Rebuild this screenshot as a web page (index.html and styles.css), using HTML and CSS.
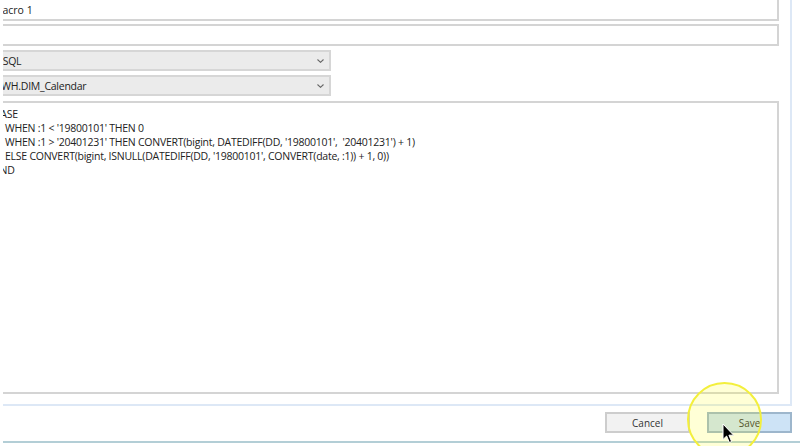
FILE: index.html
```html
<!DOCTYPE html>
<html>
<head>
<meta charset="utf-8">
<link rel="stylesheet" href="styles.css">
</head>
<body>
<div class="window">
  <div class="clip">
    <div class="panel">
      <div class="fields">
        <div class="textbox first">Macro 1</div>
        <div class="textbox second"></div>
        <div class="combo"><span class="combo-text">T-SQL</span><svg class="chevron" width="7" height="4" viewBox="0 0 7 4"><polyline points="0.5,0.5 3.5,3.3 6.5,0.5" fill="none" stroke="#666" stroke-width="1.1"/></svg></div>
        <div class="combo last"><span class="combo-text">DWH.DIM_Calendar</span><svg class="chevron" width="7" height="4" viewBox="0 0 7 4"><polyline points="0.5,0.5 3.5,3.3 6.5,0.5" fill="none" stroke="#666" stroke-width="1.1"/></svg></div>
        <div class="editor">
          <div class="line">CASE</div>
          <div class="line indent">WHEN :1 &lt; '19800101' THEN 0</div>
          <div class="line indent">WHEN :1 &gt; '20401231' THEN CONVERT(bigint, DATEDIFF(DD, '19800101',&nbsp; '20401231') + 1)</div>
          <div class="line indent">ELSE CONVERT(bigint, ISNULL(DATEDIFF(DD, '19800101', CONVERT(date, :1)) + 1, 0))</div>
          <div class="line">END</div>
        </div>
      </div>
    </div>
    <div class="buttons">
      <div class="btn cancel">Cancel</div>
      <div class="btn save">Save</div>
    </div>
    <div class="bottom-line"></div>
  </div>
  <div class="highlight"></div>
  <svg class="cursor" width="14" height="21" viewBox="0 0 14 21"><path d="M1,1 L1,16.5 L4.6,13 L7.4,19.5 L9.6,18.5 L6.9,12.2 L11.6,12.2 Z" fill="#000" stroke="#fff" stroke-width="1" stroke-linejoin="round"/></svg>
</div>
</body>
</html>
```
FILE: styles.css
```css
html, body {
  margin: 0;
  padding: 0;
  background: #ffffff;
}
body {
  font-family: "Open Sans", "Noto Sans", sans-serif;
  font-size: 10px;
  color: #222222;
}
.window {
  position: relative;
  width: 800px;
  height: 446px;
  overflow: hidden;
  background: #ffffff;
}
.clip {
  margin-left: 3px;
  height: 446px;
  overflow: hidden;
}
.panel {
  box-sizing: border-box;
  width: 804px;
  margin-left: -15px;
  margin-top: -2px;
  padding: 0 11px 10px 0;
  border-right: 2px solid #dde8f6;
  border-bottom: 2px solid #dde8f6;
}
.fields {
  display: flex;
  flex-direction: column;
}
.textbox {
  box-sizing: border-box;
  border: 2px solid #d4d4d4;
  background: #ffffff;
  padding: 0 3px;
  display: flex;
  align-items: center;
  line-height: 14px;
  font-size: 10.5px;
}
.textbox.first {
  height: 23px;
  margin-bottom: 3px;
  padding-top: 1px;
}
.textbox.second {
  height: 22px;
  margin-bottom: 4px;
}
.combo {
  box-sizing: border-box;
  width: 343px;
  height: 21px;
  margin-bottom: 4px;
  border: 2px solid #d6d6d6;
  background: #ebebeb;
  display: flex;
  align-items: center;
  justify-content: space-between;
  padding: 0 5px 0 4px;
  font-size: 10.5px;
  letter-spacing: -0.25px;
}
.combo.last {
  margin-bottom: 5px;
}
.chevron {
  display: block;
}
.editor {
  box-sizing: border-box;
  height: 293px;
  border: 2px solid #d4d4d4;
  background: #ffffff;
  padding: 4px 4px 0 4px;
  font-size: 10.5px;
  letter-spacing: -0.25px;
}
.line {
  line-height: 14px;
  white-space: nowrap;
}
.line.indent {
  padding-left: 11px;
}
.buttons {
  display: flex;
  justify-content: flex-end;
  gap: 17px;
  margin-top: 6px;
  padding-right: 8px;
}
.btn {
  box-sizing: border-box;
  width: 85px;
  height: 21px;
  display: flex;
  align-items: center;
  justify-content: center;
  font-size: 10px;
  color: #333333;
}
.cancel {
  background: #f2f2f2;
  border: 2px solid #cdcdcd;
}
.save {
  background: #cde3f6;
  border: 2px solid #9db6cc;
}
.bottom-line {
  margin-top: 8px;
  height: 2px;
  background: #b3ced6;
}
.highlight {
  position: absolute;
  left: 687px;
  top: 382px;
  width: 75px;
  height: 75px;
  box-sizing: border-box;
  border-radius: 50%;
  border: 2px solid #f3ef3c;
  background: rgba(255, 255, 0, 0.16);
}
.cursor {
  position: absolute;
  left: 722px;
  top: 423px;
}
```
